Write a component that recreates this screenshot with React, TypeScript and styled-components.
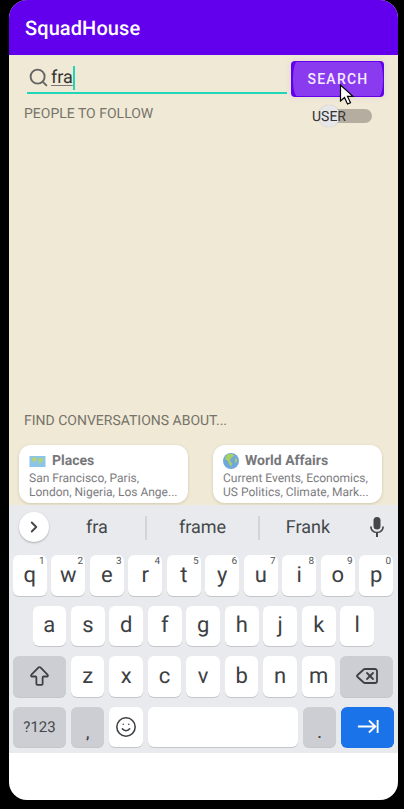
import React from 'react';
import styled, { createGlobalStyle } from 'styled-components';
import { Search, ChevronRight, ArrowBigUp, Delete, Smile } from 'lucide-react';

const GlobalStyle = createGlobalStyle`
  html, body {
    margin: 0;
    padding: 0;
    background: #000;
    font-family: Roboto, "Noto Sans", sans-serif;
    text-rendering: geometricPrecision;
  }
`;

const Page = styled.div`
  width: 404px;
  height: 809px;
  padding-left: 9px;
  box-sizing: border-box;
  background: #000;
  overflow: hidden;
`;

const Screen = styled.div`
  position: relative;
  width: 389px;
  height: 800px;
  border-radius: 18px;
  overflow: hidden;
  display: flex;
  flex-direction: column;
  background: #fff;
`;

const AppBar = styled.header`
  height: 55px;
  flex: none;
  background: #6200ee;
  color: #fff;
  font-size: 20px;
  font-weight: 500;
  letter-spacing: 0.1px;
  display: flex;
  align-items: center;
  padding: 0 0 0 16px;
`;

const Content = styled.main`
  height: 450px;
  flex: none;
  background: #f0e9d6;
  display: flex;
  flex-direction: column;
  overflow: hidden;
`;

const SearchRow = styled.div`
  display: flex;
  align-items: flex-start;
  padding: 6px 14px 0 18px;
  gap: 4px;
`;

const SearchField = styled.div`
  width: 260px;
  height: 34px;
  margin-top: -1px;
  box-sizing: border-box;
  padding: 7px 0 0 1px;
  display: flex;
  align-items: flex-start;
  gap: 2px;
  color: #666;
  border-bottom: 2px solid #1fd6b8;
`;

const SearchText = styled.span`
  font-size: 18px;
  line-height: 24px;
  color: #333;
  text-decoration: underline;
  text-decoration-color: #777;
  text-underline-offset: 2px;
  border-right: 2px solid #1fd6b8;
  margin-top: -1px;
`;

const SearchButton = styled.button`
  width: 93px;
  height: 36px;
  border: none;
  border-radius: 4px;
  background: #6200ee;
  font-family: inherit;
  box-shadow: 0 0 6px 2px rgba(98, 0, 238, 0.05);
  padding: 1px 1px 1px 2px;
  display: flex;
`;

const ButtonFace = styled.span`
  flex: 1;
  border-radius: 4px / 17px;
  background: #8a3bf0;
  color: #f4ecff;
  font-size: 14px;
  font-weight: 500;
  letter-spacing: 1.25px;
  display: flex;
  align-items: center;
  justify-content: center;
`;

const FollowRow = styled.div`
  display: flex;
  justify-content: space-between;
  padding: 0 26px 0 15px;
  margin-top: 8px;
`;

const SectionLabel = styled.div`
  font-size: 14px;
  line-height: 18px;
  color: #76736a;
`;

const ToggleWrap = styled.div`
  position: relative;
  width: 60px;
  height: 20px;
  margin-top: 1px;
`;

const ToggleTrack = styled.div`
  position: absolute;
  left: 13px;
  top: 3px;
  width: 47px;
  height: 14px;
  border-radius: 7px;
  background: #b4ada0;
`;

const ToggleThumb = styled.div`
  position: absolute;
  left: 6px;
  top: -1px;
  width: 22px;
  height: 22px;
  border-radius: 50%;
  background: #e7e6e9;
  box-shadow: 0 0 1px rgba(90, 90, 90, 0.35);
`;

const ToggleLabel = styled.span`
  position: absolute;
  left: 0;
  top: 2px;
  font-size: 14px;
  line-height: 18px;
  color: #333;
`;

const Spacer = styled.div`
  flex: 1;
`;

const FindLabel = styled(SectionLabel)`
  padding-left: 15px;
  margin-bottom: 15px;
`;

const CardRow = styled.div`
  display: flex;
  gap: 25px;
  padding: 0 0 2px 10px;
`;

const Card = styled.div`
  width: 169px;
  height: 58px;
  box-sizing: border-box;
  background: #fff;
  border-radius: 12px;
  padding: 7px 10px 5px;
  box-shadow: 0 1px 3px rgba(120, 105, 60, 0.25);
`;

const CardTitle = styled.div`
  display: flex;
  align-items: center;
  gap: 6px;
  font-size: 14px;
  line-height: 18px;
  font-weight: 700;
  color: #77777b;
`;

const CardText = styled.div`
  font-size: 12px;
  line-height: 14px;
  color: #7c7c80;
  margin-top: 1px;
  white-space: nowrap;
`;

const Keyboard = styled.section`
  height: 248px;
  flex: none;
  background: #e8eaed;
  display: flex;
  flex-direction: column;
`;

const SuggestRow = styled.div`
  height: 50px;
  flex: none;
  display: flex;
  align-items: center;
  padding-left: 10px;
`;

const ChevronCircle = styled.div`
  width: 30px;
  height: 30px;
  margin-top: -6px;
  border-radius: 50%;
  background: #fff;
  box-shadow: 0 1px 2px rgba(60, 64, 67, 0.35);
  display: flex;
  align-items: center;
  justify-content: center;
  color: #44474a;
`;

const Suggestion = styled.div<{ $width: number; $divider?: boolean }>`
  width: ${(p) => p.$width}px;
  height: 24px;
  margin-top: -5px;
  box-sizing: border-box;
  text-align: center;
  font-size: 18px;
  line-height: 24px;
  color: #44474a;
  border-right: ${(p) => (p.$divider ? '2px solid #d2d4d8' : 'none')};
`;

const MicIcon = styled.svg`
  margin-left: 14px;
  margin-top: -6px;
`;

const KeyRows = styled.div`
  display: flex;
  flex-direction: column;
  gap: 10px;
  padding: 0 5px 0 4px;
`;

const KeyRow = styled.div<{ $inset?: number }>`
  display: flex;
  gap: 4.8px;
  height: 40.5px;
  padding-left: ${(p) => p.$inset ?? 0}px;
`;

const Key = styled.div<{ $width?: number; $variant?: 'light' | 'dark' | 'blue' }>`
  position: relative;
  width: ${(p) => p.$width ?? 33.7}px;
  flex: none;
  border-radius: 6px;
  background: ${(p) => (p.$variant === 'dark' ? '#ccced4' : p.$variant === 'blue' ? '#1a73e8' : '#fff')};
  box-shadow: 0 1px 0 ${(p) => (p.$variant === 'blue' ? '#1a73e8' : '#c4c6ca')};
  color: ${(p) => (p.$variant === 'blue' ? '#fff' : '#3c4043')};
  display: flex;
  align-items: center;
  justify-content: center;
  font-size: 22px;
`;

const Hint = styled.span`
  position: absolute;
  top: 1px;
  right: 2px;
  font-size: 10px;
  line-height: 12px;
  color: #55585c;
`;

const SymbolLabel = styled.span`
  font-size: 15px;
  color: #44474a;
`;

const PunctLabel = styled.span`
  font-size: 14px;
  font-weight: 700;
  margin-top: 15px;
`;

const CursorIcon = styled.svg`
  position: absolute;
  left: 330px;
  top: 84px;
`;

const MapEmoji = () => (
  <svg width="17" height="13" viewBox="0 0 17 13">
    <rect x="0.5" y="1" width="16" height="11" fill="#8cc4ea" />
    <path d="M3 3l4-1 1 2-2 2-1 2-2-3zM9 4l4-1 2 2-3 2-1 3-1-3z" fill="#b7d36e" />
  </svg>
);

const GlobeEmoji = () => (
  <svg width="16" height="16" viewBox="0 0 16 16">
    <circle cx="8" cy="8" r="8" fill="#6fa8dc" />
    <path d="M5 1l5 0 1 2-3 2-1 3 2 2-1 4-2-3-1-3-3-2 1-3z" fill="#a9cf62" />
    <path d="M12 5l2 1 0 3-2 1z" fill="#a9cf62" />
  </svg>
);

const ROW1: [string, string][] = [
  ['q', '1'], ['w', '2'], ['e', '3'], ['r', '4'], ['t', '5'],
  ['y', '6'], ['u', '7'], ['i', '8'], ['o', '9'], ['p', '0'],
];
const ROW2 = ['a', 's', 'd', 'f', 'g', 'h', 'j', 'k', 'l'];
const ROW3 = ['z', 'x', 'c', 'v', 'b', 'n', 'm'];

export default function App() {
  return (
    <Page>
      <GlobalStyle />
      <Screen>
        <AppBar>SquadHouse</AppBar>
        <Content>
          <SearchRow>
            <SearchField>
              <Search size={21} strokeWidth={2.2} />
              <SearchText>fra</SearchText>
            </SearchField>
            <SearchButton><ButtonFace>SEARCH</ButtonFace></SearchButton>
          </SearchRow>
          <FollowRow>
            <SectionLabel>PEOPLE TO FOLLOW</SectionLabel>
            <ToggleWrap>
              <ToggleTrack />
              <ToggleThumb />
              <ToggleLabel>USER</ToggleLabel>
            </ToggleWrap>
          </FollowRow>
          <Spacer />
          <FindLabel>FIND CONVERSATIONS ABOUT...</FindLabel>
          <CardRow>
            <Card>
              <CardTitle><MapEmoji /> Places</CardTitle>
              <CardText>San Francisco, Paris,<br />London, Nigeria, Los Ange...</CardText>
            </Card>
            <Card>
              <CardTitle><GlobeEmoji /> World Affairs</CardTitle>
              <CardText>Current Events, Economics,<br />US Politics, Climate, Mark...</CardText>
            </Card>
          </CardRow>
        </Content>
        <Keyboard>
          <SuggestRow>
            <ChevronCircle><ChevronRight size={18} strokeWidth={2.5} /></ChevronCircle>
            <Suggestion $width={98} $divider>fra</Suggestion>
            <Suggestion $width={113} $divider>frame</Suggestion>
            <Suggestion $width={96}>Frank</Suggestion>
            <MicIcon width="14" height="20" viewBox="0 0 14 20" fill="#44474a">
              <rect x="3.5" y="0" width="7" height="12.5" rx="3.5" />
              <path d="M0 9.5h1.7a5.3 5.3 0 0 0 10.6 0H14a7 7 0 0 1-6 6.6V20H6v-3.9a7 7 0 0 1-6-6.6z" />
            </MicIcon>
          </SuggestRow>
          <KeyRows>
            <KeyRow>
              {ROW1.map(([k, n]) => (
                <Key key={k}>{k}<Hint>{n}</Hint></Key>
              ))}
            </KeyRow>
            <KeyRow $inset={19.5}>
              {ROW2.map((k) => <Key key={k}>{k}</Key>)}
            </KeyRow>
            <KeyRow>
              <Key $width={53} $variant="dark"><ArrowBigUp size={25} strokeWidth={1.7} /></Key>
              {ROW3.map((k) => <Key key={k}>{k}</Key>)}
              <Key $width={53} $variant="dark"><Delete size={24} strokeWidth={1.8} /></Key>
            </KeyRow>
            <KeyRow>
              <Key $width={53} $variant="dark"><SymbolLabel>?123</SymbolLabel></Key>
              <Key $variant="dark"><PunctLabel>,</PunctLabel></Key>
              <Key><Smile size={22} strokeWidth={1.7} /></Key>
              <Key $width={150} />
              <Key $variant="dark"><PunctLabel>.</PunctLabel></Key>
              <Key $width={53} $variant="blue">
                <svg width="22" height="15" viewBox="0 0 24 16" fill="none" stroke="#fff" strokeWidth="2">
                  <path d="M1 8h19M13 1.5L20 8l-7 6.5M22.5 1v14" />
                </svg>
              </Key>
            </KeyRow>
          </KeyRows>
        </Keyboard>
        <CursorIcon width="16" height="22" viewBox="0 0 16 22">
          <path d="M1.5 1v16l4-3.5 3 6.5 3-1.3-3-6.3h5.5z" fill="#fff" stroke="#000" strokeWidth="1.2" />
        </CursorIcon>
      </Screen>
    </Page>
  );
}
